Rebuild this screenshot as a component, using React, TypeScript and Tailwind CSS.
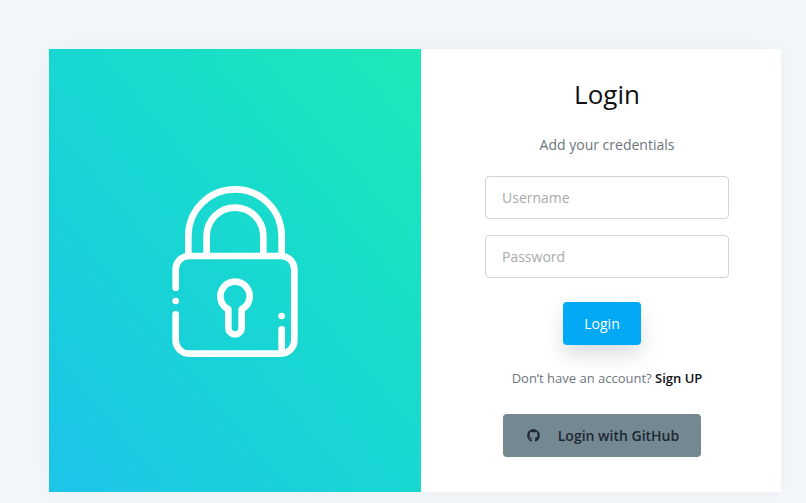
import { FaGithub } from "react-icons/fa";

const LockIcon = () => (
  <svg viewBox="0 0 510 600" className="w-[170px] h-[200px]" fill="none" stroke="#fff" strokeWidth="20" strokeLinecap="round" strokeLinejoin="round">
    <path d="M115 245V195A140 140 0 0 1 395 195V245" />
    <path d="M170 245V195A85 85 0 0 1 340 195V245" />
    <path d="M77 350V295A40 40 0 0 1 117 255H393A40 40 0 0 1 433 295V508A40 40 0 0 1 393 548H117A40 40 0 0 1 77 508V430" />
    <path d="M77 390h.01" />
    <path d="M395 435h.01" />
    <path d="M395 475V543" />
    <path d="M235 415A44 44 0 1 1 275 415V470A20 20 0 0 1 235 470Z" />
  </svg>
);

export default function App() {
  return (
    <div className="min-h-[503px] h-[503px] overflow-hidden bg-[#f4f7fa] pt-[49px] pl-[49px] font-['Open_Sans',sans-serif]">
      <div className="flex w-[732px] h-[443px] shadow-[0_0_24px_rgba(69,90,100,0.06)]">
        <div className="w-[372px] flex items-center justify-center bg-gradient-to-tr from-[#1dc4e9] to-[#1de9b6]">
          <LockIcon />
        </div>
        <div className="w-[360px] bg-white flex flex-col items-center pt-[26px] pl-3">
          <h3 className="text-[26px] leading-[39px] text-[#111] font-normal">Login</h3>
          <p className="mt-5 text-sm leading-[21px] text-[#6c757d]">Add your credentials</p>
          <input placeholder="Username" className="mt-[21px] w-[244px] h-[43px] px-4 text-sm border border-[#ced4da] rounded-[4px] outline-none placeholder:text-[#aaa]" />
          <input placeholder="Password" className="mt-4 w-[244px] h-[43px] px-4 text-sm border border-[#ced4da] rounded-[4px] outline-none placeholder:text-[#aaa]" />
          <button className="mt-6 mr-[10px] w-[78px] h-[43px] bg-[#04a9f5] text-white text-sm rounded-[4px] shadow-[0_10px_20px_rgba(69,90,100,0.2)]">Login</button>
          <p className="mt-6 text-[13px] leading-[18px] text-[#6c757d]">
            Don’t have an account? <a className="text-[#111] font-semibold">Sign UP</a>
          </p>
          <button className="mt-[27px] mr-[10px] w-[198px] h-[43px] pl-[2px] bg-[#748892] rounded-[4px] flex items-center justify-center gap-[18px] text-sm font-semibold text-[#1d2733]">
            <FaGithub className="text-[13px]" />
            Login with GitHub
          </button>
        </div>
      </div>
    </div>
  );
}
